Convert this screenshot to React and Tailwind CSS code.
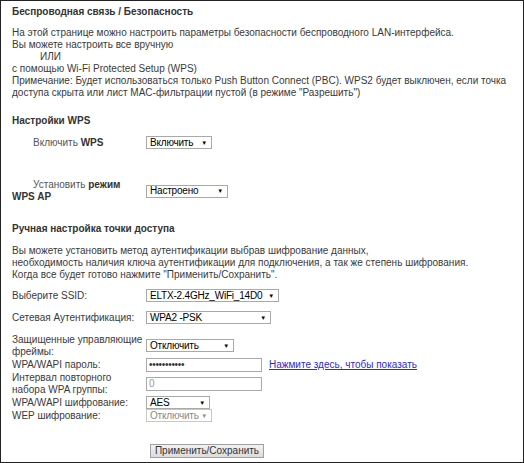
import React from 'react';

function Select({ value, width, disabled }) {
  return (
    <div
      className={`flex h-[13px] items-center justify-between border bg-white pl-[3px] pr-[4px] text-[10px] leading-none tracking-[-0.2px] ${
        disabled ? 'border-[#c8c8c8] text-[#8a8a8a]' : 'border-[#a9a9a9] text-black'
      }`}
      style={{ width }}
    >
      <span className="whitespace-nowrap">{value}</span>
      <span className={`text-[6px] ${disabled ? 'text-[#8a8a8a]' : 'text-black'}`}>▼</span>
    </div>
  );
}

function Input({ children }) {
  return (
    <div className="flex h-[14px] w-[116px] items-center border border-[#a9a9a9] bg-white pl-[2px] text-[10px] leading-none">
      {children}
    </div>
  );
}

function Row({ label, children, align = 'items-center' }) {
  return (
    <div className={`flex ${align}`}>
      <div className="w-[134px] shrink-0 whitespace-nowrap leading-[12px]">{label}</div>
      {children}
    </div>
  );
}

export default function App() {
  return (
    <div className="h-[463px] w-[524px] overflow-hidden border border-[#222] bg-white pl-[11px] pt-[5px] font-['Liberation_Sans',Arial,sans-serif] text-[10px] leading-[12px] text-[#3a3a3a]">
      <h1 className="font-bold text-[#333]">Беспроводная связь / Безопасность</h1>

      <div className="mt-[9px] whitespace-nowrap">
        <p>На этой странице можно настроить параметры безопасности беспроводного LAN-интерфейса.</p>
        <p>Вы можете настроить все вручную</p>
        <p className="pl-[28px]">ИЛИ</p>
        <p>с помощью Wi-Fi Protected Setup (WPS)</p>
        <p>
          Примечание: Будет использоваться только Push Button Connect (PBC). WPS2 будет выключен, если точка
          <br />
          доступа скрыта или лист MAC-фильтрации пустой (в режиме "Разрешить")
        </p>
      </div>

      <h2 className="mt-[16px] font-bold text-[#333]">Настройки WPS</h2>

      <div className="mt-[9px]">
        <Row
          label={
            <span className="pl-[21px] text-[#555]">
              Включить <b className="text-[#333]">WPS</b>
            </span>
          }
        >
          <Select value="Включить" width={66} />
        </Row>
      </div>

      <div className="mt-[30px]">
        <Row
          label={
            <>
              <div className="pl-[21px] text-[#555]">
                Установить <b className="text-[#333]">режим</b>
              </div>
              <div className="font-bold text-[#333]">WPS AP</div>
            </>
          }
        >
          <Select value="Настроено" width={82} />
        </Row>
      </div>

      <h2 className="mt-[20px] font-bold text-[#333]">Ручная настройка точки доступа</h2>

      <div className="mt-[10px] whitespace-nowrap">
        <p>Вы можете установить метод аутентификации выбрав шифрование данных,</p>
        <p>необходимость наличия ключа аутентификации для подключения, а так же степень шифрования.</p>
        <p>Когда все будет готово нажмите "Применить/Сохранить".</p>
      </div>

      <div className="mt-[8px]">
        <Row label="Выберите SSID:">
          <Select value="ELTX-2.4GHz_WiFi_14D0" width={133} />
        </Row>
      </div>

      <div className="mt-[9px]">
        <Row label="Сетевая Аутентификация:">
          <Select value="WPA2 -PSK" width={125} />
        </Row>
      </div>

      <div className="mt-[10px] flex flex-col">
        <Row
          align="items-start"
          label={
            <>
              Защищенные управляющие
              <br />
              фреймы:
            </>
          }
        >
          <div className="pt-[5px]">
            <Select value="Отключить" width={88} />
          </div>
        </Row>
        <Row label="WPA/WAPI пароль:">
          <div className="flex items-center">
            <Input>
              <span className="text-[10px] tracking-[-0.3px] text-[#333]">•••••••••••</span>
            </Input>
            <a href="#" className="ml-[7px] text-[#2b2bd9] underline">
              Нажмите здесь, чтобы показать
            </a>
          </div>
        </Row>
        <Row
          label={
            <>
              Интервал повторного
              <br />
              набора WPA группы:
            </>
          }
        >
          <Input>
            <span className="text-[#999]">0</span>
          </Input>
        </Row>
        <Row label="WPA/WAPI шифрование:">
          <Select value="AES" width={64} />
        </Row>
        <Row label="WEP шифрование:">
          <Select value="Отключить" width={66} disabled />
        </Row>
      </div>

      <div className="mt-[22px] pl-[138px]">
        <button className="h-[14px] w-[114px] border border-[#a0a0a0] bg-gradient-to-b from-[#f2f2f2] to-[#dcdcdc] text-[10px] leading-none text-[#333]">
          Применить/Сохранить
        </button>
      </div>
    </div>
  );
}
